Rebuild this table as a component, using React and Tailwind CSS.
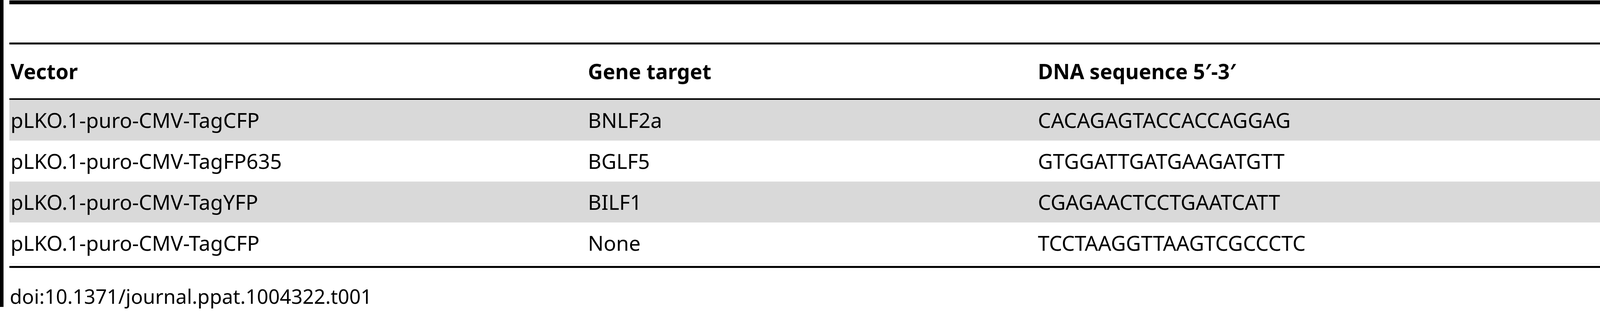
import React from "react";

const rows = [
  ["pLKO.1-puro-CMV-TagCFP", "BNLF2a", "CACAGAGTACCACCAGGAG", true],
  ["pLKO.1-puro-CMV-TagFP635", "BGLF5", "GTGGATTGATGAAGATGTT", false],
  ["pLKO.1-puro-CMV-TagYFP", "BILF1", "CGAGAACTCCTGAATCATT", true],
  ["pLKO.1-puro-CMV-TagCFP", "None", "TCCTAAGGTTAAGTCGCCCTC", false],
];

export default function App() {
  return (
    <div
      className="flex w-[4134px] h-[800px] bg-white text-black text-[53px] leading-[54px]"
      style={{ fontFamily: '"Noto Sans", "Open Sans", sans-serif' }}
    >
      <div className="w-[9px] h-[787px] bg-black shrink-0" />
      <div className="ml-[15px] flex-1 flex flex-col">
        <div className="mt-[1px] h-[10px] bg-black" />
        <div className="h-[98px]" />
        <div className="h-[5px] bg-black" />
        <div className="h-[138px] flex items-center font-bold">
          <div className="w-[1481px] pl-[3px]">Vector</div>
          <div className="w-[1152px]">Gene target</div>
          <div>DNA sequence 5′-3′</div>
        </div>
        <div className="h-[4px] bg-black" />
        {rows.map(([v, g, s, gray], i) => (
          <div
            key={i}
            className={
              "h-[105px] flex items-center border-b border-[#ededed] " +
              (gray ? "bg-[#d9d9d9]" : "bg-white")
            }
          >
            <div className="w-[1481px] pl-[3px]">{v}</div>
            <div className="w-[1152px]">{g}</div>
            <div>{s}</div>
          </div>
        ))}
        <div className="h-[6px]" />
        <div className="h-[5px] bg-black" />
        <div className="mt-[45px] pl-[1px] text-[51px]">doi:10.1371/journal.ppat.1004322.t001</div>
      </div>
    </div>
  );
}
